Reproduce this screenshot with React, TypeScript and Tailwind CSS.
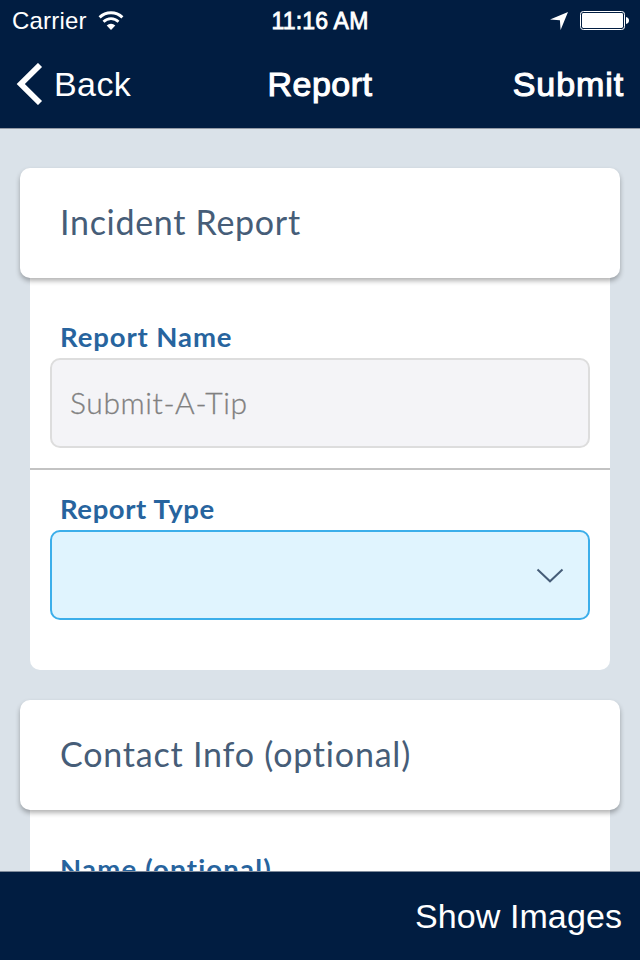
import type { ReactNode } from "react";

const helvetica = "font-['Liberation_Sans',sans-serif]";
const avenir = "font-['Lato',sans-serif]";

function WifiIcon() {
  return (
    <svg width="26" height="20" viewBox="0 0 26 20" fill="none" stroke="#fff">
      <path d="M1.6 6.4a16.2 16.2 0 0 1 22.8 0" strokeWidth="2.9" />
      <path d="M5.5 10.7a10.6 10.6 0 0 1 15 0" strokeWidth="2.7" />
      <path d="M13 19 8.7 14.500a6 6 0 0 1 8.600 0Z" fill="#fff" stroke="none" />
    </svg>
  );
}

function LocationIcon() {
  return (
    <svg width="18" height="18" viewBox="0 0 18 18">
      <path d="M18 0 10.6 18 9.9 8.3 0 7.5Z" fill="#fff" />
    </svg>
  );
}

function BatteryIcon() {
  return (
    <svg width="49" height="20" viewBox="0 0 49 20">
      <rect x="0.5" y="0.5" width="44" height="18" rx="2.8" fill="none" stroke="#fff" />
      <rect x="2" y="2" width="41" height="15" rx="1.4" fill="#fff" />
      <path d="M46 6c4 .8 4 6.200 0 7Z" fill="#fff" />
    </svg>
  );
}

function StatusBar() {
  return (
    <div className="grid h-10 grid-cols-3 items-center pt-[2px] text-[24px] leading-[38px]">
      <div className="flex items-center pl-3">
        <span className="w-[86px] whitespace-nowrap tracking-[0.2px]">Carrier</span>
        <WifiIcon />
      </div>
      <div className="text-center text-[23px] tracking-[0.2px] whitespace-nowrap [-webkit-text-stroke:0.8px_#fff]">11:16 AM</div>
      <div className="flex items-center justify-end gap-3 pr-[11px]">
        <LocationIcon />
        <BatteryIcon />
      </div>
    </div>
  );
}

function NavBar() {
  return (
    <div className="grid h-[88px] grid-cols-3 items-center text-[34px] leading-10">
      <div className="flex items-center pl-4">
        <svg width="27" height="42" viewBox="0 0 27 42" fill="none" stroke="#fff" strokeWidth="5.8">
          <path d="M24 2 4.800 21 24 40" />
        </svg>
        <span className="ml-[11px] tracking-[0.4px]">Back</span>
      </div>
      <div className="text-center tracking-[0.5px] [-webkit-text-stroke:1.1px_#fff]">Report</div>
      <div className="pr-[16px] text-right tracking-[0.9px] [-webkit-text-stroke:1.1px_#fff]">Submit</div>
    </div>
  );
}

function Section({ title, children }: { title: ReactNode; children: ReactNode }) {
  return (
    <section className="px-5">
      <h2 className="relative flex h-[110px] items-center rounded-[10px] bg-white pb-[2px] pl-10 text-[34px] leading-10 font-normal text-[#465d78] shadow-[0_3px_5px_rgba(0,0,0,0.3)]">
        {title}
      </h2>
      <div className="mx-[10px] rounded-b-[10px] bg-white">{children}</div>
    </section>
  );
}

const labelClass = "block pl-[10px] text-[27.5px] leading-[36px] font-bold text-[#27649e]";

export default function App() {
  return (
    <div className={`flex h-[960px] w-[640px] flex-col overflow-hidden bg-[#dae2e9] ${helvetica}`}>
      <header className="h-[129px] shrink-0 border-b border-[#9299a5] bg-[#011d41] text-white">
        <StatusBar />
        <NavBar />
      </header>

      <main className={`flex h-[742px] shrink-0 flex-col gap-[30px] overflow-hidden pt-[39px] ${avenir}`}>
        <Section title={<span className="tracking-[0.7px]">Incident Report</span>}>
          <div className="h-[192px] border-b-2 border-[#c3c3c3] px-5 pt-[41px]">
            <label className={labelClass}><span className="tracking-[0.9px]">Report Name</span></label>
            <div className="mt-[3px] flex h-[90px] items-center rounded-[10px] border-2 border-[#dddddd] bg-[#f4f4f7] pb-[2px] pl-[18px] text-[30px] font-light text-[#808080] [-webkit-text-stroke:0.3px_#808080]">
              <span className="tracking-[0.6px]">Submit-A-Tip</span>
            </div>
          </div>
          <div className="h-[200px] px-5 pt-[21px]">
            <label className={labelClass}><span className="tracking-[0.6px]">Report Type</span></label>
            <div className="mt-[3px] flex h-[90px] items-center justify-end rounded-[10px] border-2 border-[#3caeea] bg-[#e0f4fe] pt-[2px] pr-[24px]">
              <svg width="28" height="16" viewBox="0 0 28 16" fill="none" stroke="#465d78" strokeWidth="2">
                <path d="M1.500 1.500 14 13.300 26.500 1.500" />
              </svg>
            </div>
          </div>
        </Section>

        <Section title={<span className="tracking-[0.8px]">Contact Info (optional)</span>}>
          <div className="h-[192px] px-5 pt-[41px]">
            <label className={labelClass}><span className="tracking-[1.2px]">Name (optional)</span></label>
          </div>
        </Section>
      </main>

      <footer className="flex h-[89px] shrink-0 items-center justify-end border-t border-[#7f8b9b] bg-[#011d41] pr-[18px] text-[34px] leading-10 text-white">
        <span className="tracking-[0.1px]">Show Images</span>
      </footer>
    </div>
  );
}
